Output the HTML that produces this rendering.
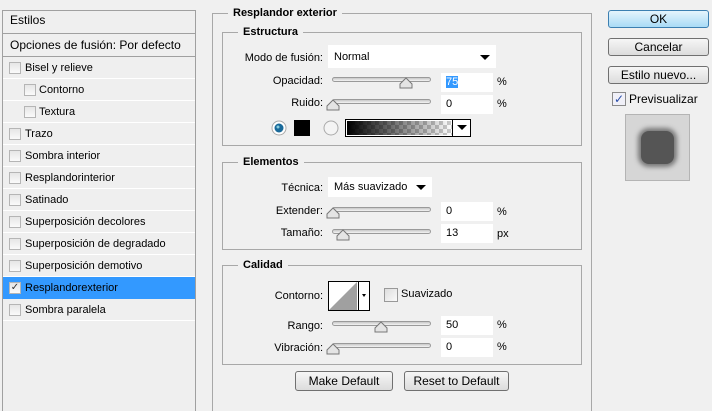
<!DOCTYPE html><html><head><meta charset="utf-8"><style>
*{box-sizing:border-box;margin:0;padding:0}
html,body{width:712px;height:411px;overflow:hidden}
body{background:#f0f0f0;font-family:"Liberation Sans","DejaVu Sans",sans-serif;font-size:11px;color:#000;position:relative}
.a{position:absolute}
.list{left:2px;top:10px;width:194px;height:401px;border:1px solid #a0a0a0;border-bottom:none;background:#efefef}
.row{position:absolute;left:0;width:192px;height:22px;border-bottom:1px solid #fff;line-height:22px;padding-left:22px;font-size:11px}
.cb{position:absolute;width:12px;height:12px;border:1px solid #b5b5b5;background:linear-gradient(#e6e6e6,#fafafa);top:5px}
.lab{position:absolute;text-align:right;width:120px;line-height:14px}
.inp{position:absolute;background:#fff;width:52px;height:19px;line-height:19px;padding-left:5px}
.track{position:absolute;width:99px;height:5px;border:1px solid #9a9a9a;border-radius:3px;background:linear-gradient(#c8c8c8,#f4f4f4)}
.box{position:absolute;border:1px solid #a8a8a8}
.leg{position:absolute;background:#f0f0f0;font-weight:bold;padding:0 5px;line-height:14px;font-size:11px}
.btn{position:absolute;border:1px solid #707070;border-radius:3px;background:linear-gradient(#f6f6f6,#dcdcdc);text-align:center;font-size:12px}
</style></head><body>
<div class="a list">
 <div class="row" style="top:0;height:23px;padding-left:7px;border-bottom:1px solid #a0a0a0;line-height:19px;font-size:12px">Estilos</div>
 <div class="row" style="top:24px;height:22px;padding-left:7px;border-bottom:1px solid #a0a0a0;line-height:20px;font-size:12px">Opciones de fusión: Por defecto</div>
 <div class="row" style="top:46px"><span class="cb" style="left:6px"></span>Bisel y relieve</div>
 <div class="row" style="top:68px;padding-left:36px"><span class="cb" style="left:21px"></span>Contorno</div>
 <div class="row" style="top:90px;padding-left:36px"><span class="cb" style="left:21px"></span>Textura</div>
 <div class="row" style="top:112px"><span class="cb" style="left:6px"></span>Trazo</div>
 <div class="row" style="top:134px"><span class="cb" style="left:6px"></span>Sombra interior</div>
 <div class="row" style="top:156px"><span class="cb" style="left:6px"></span>Resplandorinterior</div>
 <div class="row" style="top:178px"><span class="cb" style="left:6px"></span>Satinado</div>
 <div class="row" style="top:200px"><span class="cb" style="left:6px"></span>Superposición decolores</div>
 <div class="row" style="top:222px"><span class="cb" style="left:6px"></span>Superposición de degradado</div>
 <div class="row" style="top:244px"><span class="cb" style="left:6px"></span>Superposición demotivo</div>
 <div class="row" style="top:266px;background:#3399ff;border-bottom:1px solid #3399ff"><span class="cb" style="left:6px;font-size:10px;line-height:9px;text-align:center;color:#333">✓</span>Resplandorexterior</div>
 <div class="row" style="top:288px"><span class="cb" style="left:6px"></span>Sombra paralela</div>
</div>

<div class="box" style="left:212px;top:13px;width:380px;height:398px;border-bottom:none"></div>
<div class="leg" style="left:228px;top:6px">Resplandor exterior</div>

<div class="box" style="left:222px;top:32px;width:360px;height:114px"></div>
<div class="leg" style="left:238px;top:25px">Estructura</div>
<div class="lab" style="left:203px;top:51px">Modo de fusión:</div>
<div class="a" style="left:328px;top:45px;width:168px;height:23px;background:#fff;padding:6px 0 0 6px;line-height:12px">Normal<span class="a" style="right:6px;top:10px;border:5px solid transparent;border-top:5px solid #000"></span></div>
<div class="lab" style="left:203px;top:74px">Opacidad:</div>
<div class="track" style="left:332px;top:77px"></div>
<svg class="a" style="left:399px;top:77px" width="14" height="12"><path d="M1 11V7L7 1L13 7V11Z" fill="#e4e4e4" stroke="#777"/></svg>
<div class="inp" style="left:441px;top:73px"><span style="background:#3399ff;color:#fff">75</span></div>
<div class="a" style="left:497px;top:76px">%</div>
<div class="lab" style="left:203px;top:96px">Ruido:</div>
<div class="track" style="left:332px;top:99px"></div>
<svg class="a" style="left:326px;top:99px" width="14" height="12"><path d="M1 11V7L7 1L13 7V11Z" fill="#e4e4e4" stroke="#777"/></svg>
<div class="inp" style="left:441px;top:95px">0</div>
<div class="a" style="left:497px;top:98px">%</div>
<svg class="a" style="left:270px;top:119px" width="20" height="18"><circle cx="9" cy="9" r="7" fill="#fff" stroke="#aaa"/><circle cx="9" cy="9" r="4.5" fill="#1a6a9a"/><circle cx="8" cy="8" r="1.5" fill="#8cd"/></svg>
<div class="a" style="left:294px;top:120px;width:16px;height:16px;background:#000"></div>
<svg class="a" style="left:322px;top:119px" width="20" height="18"><circle cx="9" cy="9" r="7" fill="#f4f4f4" stroke="#aaa"/></svg>
<div class="a" style="left:345px;top:119px;width:126px;height:18px;border:1px solid #000;background:#fff">
 <div class="a" style="left:1px;top:1px;width:105px;height:14px;background:linear-gradient(90deg,#000,rgba(0,0,0,0)),repeating-conic-gradient(#ccc 0 25%,#fff 0 50%) 0 0/8px 8px"></div>
 <div class="a" style="left:106px;top:0;width:18px;height:16px;border-left:1px solid #000"><span class="a" style="left:4px;top:5px;border:5px solid transparent;border-top:5px solid #000"></span></div>
</div>

<div class="box" style="left:222px;top:162px;width:360px;height:88px"></div>
<div class="leg" style="left:238px;top:155px">Elementos</div>
<div class="lab" style="left:203px;top:181px">Técnica:</div>
<div class="a" style="left:328px;top:177px;width:104px;height:20px;background:#fff;padding:4px 0 0 6px;line-height:12px">Más suavizado<span class="a" style="right:6px;top:8px;border:5px solid transparent;border-top:5px solid #000"></span></div>
<div class="lab" style="left:203px;top:204px">Extender:</div>
<div class="track" style="left:332px;top:207px"></div>
<svg class="a" style="left:326px;top:207px" width="14" height="12"><path d="M1 11V7L7 1L13 7V11Z" fill="#e4e4e4" stroke="#777"/></svg>
<div class="inp" style="left:441px;top:202px">0</div>
<div class="a" style="left:497px;top:206px">%</div>
<div class="lab" style="left:203px;top:226px">Tamaño:</div>
<div class="track" style="left:332px;top:229px"></div>
<svg class="a" style="left:336px;top:229px" width="14" height="12"><path d="M1 11V7L7 1L13 7V11Z" fill="#e4e4e4" stroke="#777"/></svg>
<div class="inp" style="left:441px;top:224px">13</div>
<div class="a" style="left:497px;top:228px">px</div>

<div class="box" style="left:222px;top:265px;width:360px;height:100px"></div>
<div class="leg" style="left:238px;top:258px">Calidad</div>
<div class="lab" style="left:203px;top:289px">Contorno:</div>
<div class="a" style="left:328px;top:281px;width:42px;height:30px;border:1px solid #000;background:#fff">
<svg class="a" style="left:0;top:0" width="29" height="28"><path d="M0 28L28 0V28Z" fill="#a0a0a0"/></svg>
<div class="a" style="left:29px;top:0;width:11px;height:28px;border-left:1px solid #000"><span class="a" style="left:3px;top:12px;border:2px solid transparent;border-top:3px solid #000"></span></div></div>
<div class="a" style="left:384px;top:288px;width:14px;height:14px;border:1px solid #999;background:linear-gradient(135deg,#ddd,#fafafa)"></div>
<div class="a" style="left:401px;top:288px">Suavizado</div>
<div class="lab" style="left:203px;top:319px">Rango:</div>
<div class="track" style="left:332px;top:321px"></div>
<svg class="a" style="left:374px;top:321px" width="14" height="12"><path d="M1 11V7L7 1L13 7V11Z" fill="#e4e4e4" stroke="#777"/></svg>
<div class="inp" style="left:441px;top:316px">50</div>
<div class="a" style="left:497px;top:319px">%</div>
<div class="lab" style="left:203px;top:341px">Vibración:</div>
<div class="track" style="left:332px;top:343px"></div>
<svg class="a" style="left:326px;top:343px" width="14" height="12"><path d="M1 11V7L7 1L13 7V11Z" fill="#e4e4e4" stroke="#777"/></svg>
<div class="inp" style="left:441px;top:338px">0</div>
<div class="a" style="left:497px;top:341px">%</div>

<div class="btn" style="left:295px;top:371px;width:98px;height:20px;line-height:18px">Make Default</div>
<div class="btn" style="left:404px;top:371px;width:105px;height:20px;line-height:18px">Reset to Default</div>

<div class="btn" style="left:608px;top:10px;width:101px;height:18px;line-height:16px;border-color:#3c7fb1;background:linear-gradient(#e5f4fc,#a9dbf6)">OK</div>
<div class="btn" style="left:608px;top:38px;width:101px;height:18px;line-height:16px">Cancelar</div>
<div class="btn" style="left:608px;top:66px;width:101px;height:18px;line-height:16px">Estilo nuevo...</div>
<div class="a" style="left:612px;top:92px;width:14px;height:14px;border:1px solid #8a8a8a;background:#f0f0f8;color:#2a4ea8;font-size:12px;line-height:12px;text-align:center;font-weight:bold">✓</div>
<div class="a" style="left:629px;top:92px;font-size:12px">Previsualizar</div>
<div class="a" style="left:625px;top:114px;width:65px;height:67px;border:1px solid #b4b4b4;background:#d6d6d6">
<div class="a" style="left:15px;top:16px;width:33px;height:33px;border-radius:8px;background:#555;box-shadow:0 0 5px 3px #777"></div></div>
</body></html>
